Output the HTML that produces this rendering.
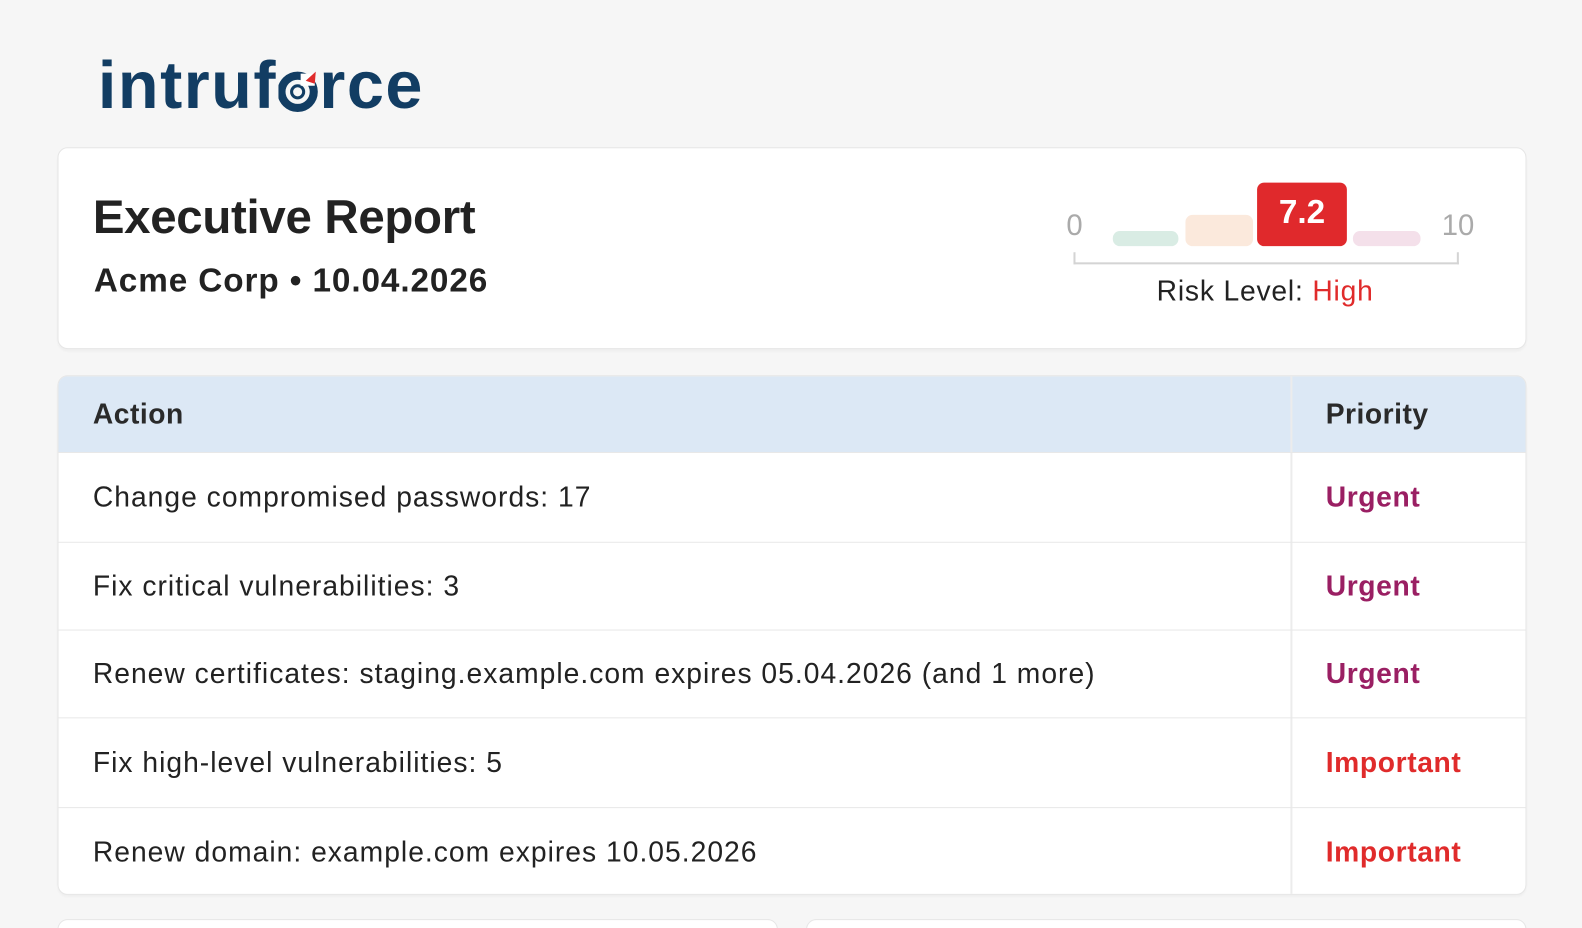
<!DOCTYPE html>
<html><head><meta charset="utf-8"><style>
*{margin:0;padding:0;box-sizing:border-box}
html,body{width:1582px;height:928px;overflow:hidden}
body{background:#f6f6f6;font-family:"Liberation Sans",sans-serif;color:#222;position:relative}
#w{position:absolute;left:0;top:0;width:1568px;height:920px;transform:scale(1.0089);transform-origin:0 0}
.logo{position:absolute;left:97px;top:44px;font-size:66px;font-weight:bold;color:#123d63;letter-spacing:1.5px;display:flex;align-items:baseline;line-height:80px}
.card{position:absolute;background:#fff;border:1px solid #e6e6e6;border-radius:10px;box-shadow:0 2px 2px rgba(0,0,0,.03)}
.t1{position:absolute;left:34px;top:40px;font-size:47px;font-weight:bold;letter-spacing:-0.3px;color:#222}
.t2{position:absolute;left:35px;top:112px;font-size:33px;font-weight:bold;color:#222;letter-spacing:0.9px}
.g{position:absolute;color:#aaa;font-size:29px}
.bar{position:absolute;border-radius:7px}
.row{position:absolute;left:0;width:1455px;border-top:1px solid #e8e8e8;font-size:28px;letter-spacing:1px}
.row span{position:absolute;left:34px;top:50%;transform:translateY(-50%);white-space:nowrap}
.row b{position:absolute;left:1256px;top:50%;transform:translateY(-50%);font-weight:bold;white-space:nowrap;letter-spacing:0.6px}
.u{color:#9a1f63}.i{color:#e02b2b}
</style></head><body><div id="w">
<div class="logo">intruf<svg width="40" height="44" viewBox="0 0 40 44" style="margin:0 1px;position:relative;top:4px"><circle cx="19" cy="24" r="16" fill="none" stroke="#123d63" stroke-width="8"/><circle cx="19" cy="24" r="6" fill="none" stroke="#123d63" stroke-width="3"/><rect x="22" y="6" width="14" height="12" fill="#fff"/><polygon points="27,13 37,4 36,16" fill="#e02b2b"/></svg>rce</div>

<div class="card" style="left:57px;top:146px;width:1456px;height:200px">
<div class="t1">Executive Report</div>
<div class="t2">Acme Corp • 10.04.2026</div>
<div class="g" style="left:999px;top:61px">0</div>
<div class="g" style="left:1371px;top:61px">10</div>
<div class="bar" style="left:1045px;top:82px;width:65px;height:15px;background:#d9ece4"></div>
<div class="bar" style="left:1117px;top:66px;width:67px;height:31px;background:#fbe9dc"></div>
<div class="bar" style="left:1188px;top:34px;width:89px;height:63px;background:#e0292c;color:#fff;font-size:33px;font-weight:bold;text-align:center;line-height:58px">7.2</div>
<div class="bar" style="left:1283px;top:82px;width:67px;height:15px;background:#f4e0ea"></div>
<div style="position:absolute;left:1006px;top:103px;width:382px;height:12px;border:2px solid #d4d4d4;border-top:none"></div>
<div style="position:absolute;left:996px;width:400px;text-align:center;top:126px;font-size:28px;color:#222;letter-spacing:0.8px">Risk Level: <span style="color:#e02b2b">High</span></div>
</div>

<div class="card" style="left:57px;top:372px;width:1456px;height:515px;overflow:hidden">
<div style="position:absolute;left:0;top:0;width:1456px;height:75px;background:#dce8f5;font-size:28px;font-weight:bold;color:#2a2a2a;letter-spacing:0.5px">
<span style="position:absolute;left:34px;top:22px">Action</span><span style="position:absolute;left:1256px;top:22px">Priority</span></div>
<div style="position:absolute;left:1221px;top:0;width:2px;height:515px;background:#ececec"></div>
<div class="row" style="top:75px;height:89px"><span>Change compromised passwords: 17</span><b class="u">Urgent</b></div>
<div class="row" style="top:164px;height:87px"><span>Fix critical vulnerabilities: 3</span><b class="u">Urgent</b></div>
<div class="row" style="top:251px;height:87px"><span>Renew certificates: staging.example.com expires 05.04.2026 (and 1 more)</span><b class="u">Urgent</b></div>
<div class="row" style="top:338px;height:89px"><span>Fix high-level vulnerabilities: 5</span><b class="i">Important</b></div>
<div class="row" style="top:427px;height:88px"><span>Renew domain: example.com expires 10.05.2026</span><b class="i">Important</b></div>
</div>

<div class="card" style="left:57px;top:911px;width:714px;height:30px"></div>
<div class="card" style="left:799px;top:911px;width:714px;height:30px"></div>
</div></body></html>
